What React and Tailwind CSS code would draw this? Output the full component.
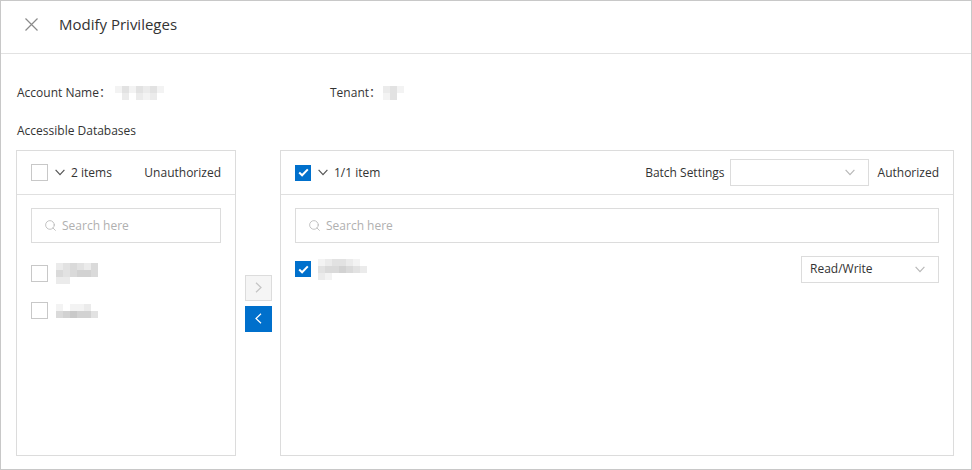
import { Search } from 'lucide-react';

const SHADE = {
  0: 'bg-white',
  1: 'bg-[#f3f3f3]',
  2: 'bg-[#ebebeb]',
  3: 'bg-[#e2e2e2]',
  4: 'bg-[#dadada]',
  5: 'bg-[#d2d2d2]',
  6: 'bg-[#c9c9c9]',
};

// pixelated placeholder for masked names
const Mosaic = ({ rows }) => (
  <div className="flex flex-col">
    {rows.map((r, i) => (
      <div key={i} className="flex">
        {r.map((c, j) => <div key={j} className={`w-[7px] h-[7px] ${SHADE[c]}`} />)}
      </div>
    ))}
  </div>
);

const Check = ({ checked }) => (
  checked ? (
    <span className="w-[16px] h-[16px] bg-[#0070cc] flex items-center justify-center shrink-0">
      <svg width="11" height="9" viewBox="0 0 11 9"><path d="M1.2 4.6 L4.1 7.3 L9.8 1.4" fill="none" stroke="#fff" strokeWidth="2" /></svg>
    </span>
  ) : (
    <span className="w-[17px] h-[17px] border border-[#c8c8c8] bg-white shrink-0" />
  )
);

const Down = ({ color = '#555', w = 10 }) => (
  <svg width={w} height="7" viewBox="0 0 10 7"><path d="M0.6 0.8 L5 5.6 L9.4 0.8" fill="none" stroke={color} strokeWidth="1.2" /></svg>
);

const SearchBox = () => (
  <div className="h-[35px] border border-[#dcdcdc] flex items-center pl-[12px] gap-[5px] text-[12px] text-[#b0b0b0]">
    <Search size={13} strokeWidth={1.5} color="#b5b5b5" />
    <span>Search here</span>
  </div>
);

export default function App() {
  return (
    <div className="w-[972px] h-[470px] border border-[#c8c8c8] bg-white flex flex-col text-[#333] font-['Open_Sans','Noto_Sans_CJK_SC',sans-serif]">
      <div className="h-[53px] shrink-0 border-b border-[#e2e2e2] flex items-center pl-[24px] pb-[5px]">
        <svg width="13" height="13" viewBox="0 0 13 13"><path d="M0.5 0.5 L12.5 12.5 M12.5 0.5 L0.5 12.5" stroke="#8a8a8a" strokeWidth="1.2" /></svg>
        <span className="ml-[21px] text-[15px] leading-none">Modify Privileges</span>
      </div>

      <div className="flex flex-col pl-[15px] text-[12px]">
        <div className="h-[20px] mt-[29px] flex items-center pl-[1px]">
          <div className="w-[313px] flex items-center">
            <span>Account Name：</span>
            <span className="ml-[4px]"><Mosaic rows={[[1, 3, 1, 3, 2, 3, 1], [0, 2, 0, 2, 1, 2, 0]]} /></span>
          </div>
          <span>Tenant：</span>
          <span className="ml-[2px]"><Mosaic rows={[[2, 3, 1], [1, 3, 0]]} /></span>
        </div>
        <div className="h-[20px] mt-[18px] flex items-center pl-[1px]">Accessible Databases</div>

        <div className="mt-[9px] flex items-center">
          <div className="w-[220px] h-[306px] border border-[#dcdcdc] flex flex-col">
            <div className="h-[44px] shrink-0 border-b border-[#e0e0e0] flex items-center px-[14px]">
              <Check />
              <span className="ml-[7px]"><Down /></span>
              <span className="ml-[6px]">2 items</span>
              <span className="ml-auto">Unauthorized</span>
            </div>
            <div className="mx-[14px] mt-[13px]"><SearchBox /></div>
            <div className="mt-[12px] px-[14px]">
              <div className="h-[37px] flex items-center gap-[8px]">
                <Check />
                <Mosaic rows={[[2, 3, 4, 3, 2, 4], [4, 3, 4, 5, 5, 4], [2, 2, 0, 0, 0, 0]]} />
              </div>
              <div className="h-[37px] flex items-center gap-[8px]">
                <Check />
                <Mosaic rows={[[1, 0, 1, 1, 2, 0], [4, 5, 6, 5, 5, 3]]} />
              </div>
            </div>
          </div>

          <div className="ml-[9px] w-[27px] flex flex-col gap-[5px]">
            <div className="h-[26px] border border-[#dcdcdc] bg-[#f5f5f5] flex items-center justify-center">
              <svg width="7" height="11" viewBox="0 0 7 11"><path d="M1 0.8 L6 5.5 L1 10.2" fill="none" stroke="#c4c4c4" strokeWidth="1.2" /></svg>
            </div>
            <div className="h-[26px] bg-[#0070cc] flex items-center justify-center">
              <svg width="7" height="11" viewBox="0 0 7 11"><path d="M6 0.8 L1 5.5 L6 10.2" fill="none" stroke="#fff" strokeWidth="1.2" /></svg>
            </div>
          </div>

          <div className="ml-[8px] w-[674px] h-[306px] border border-[#dcdcdc] flex flex-col">
            <div className="h-[44px] shrink-0 border-b border-[#e0e0e0] flex items-center px-[14px]">
              <Check checked />
              <span className="ml-[7px]"><Down /></span>
              <span className="ml-[6px]">1/1 item</span>
              <span className="ml-auto">Batch Settings</span>
              <div className="ml-[5px] w-[139px] h-[27px] border border-[#dcdcdc] flex items-center justify-end pr-[13px]">
                <Down color="#b8b8b8" />
              </div>
              <span className="ml-[9px]">Authorized</span>
            </div>
            <div className="mx-[14px] mt-[13px]"><SearchBox /></div>
            <div className="mt-[8px] px-[14px]">
              <div className="h-[36px] flex items-center">
                <Check checked />
                <span className="ml-[7px]">
                  <Mosaic rows={[[1, 2, 3, 3, 2, 1, 0], [3, 4, 4, 5, 4, 3, 2], [2, 1, 0, 0, 0, 0, 0]]} />
                </span>
                <div className="ml-auto w-[138px] h-[27px] border border-[#dcdcdc] flex items-center pl-[8px] pr-[13px]">
                  <span>Read/Write</span>
                  <span className="ml-auto"><Down color="#b8b8b8" /></span>
                </div>
              </div>
            </div>
          </div>
        </div>
      </div>
    </div>
  );
}
